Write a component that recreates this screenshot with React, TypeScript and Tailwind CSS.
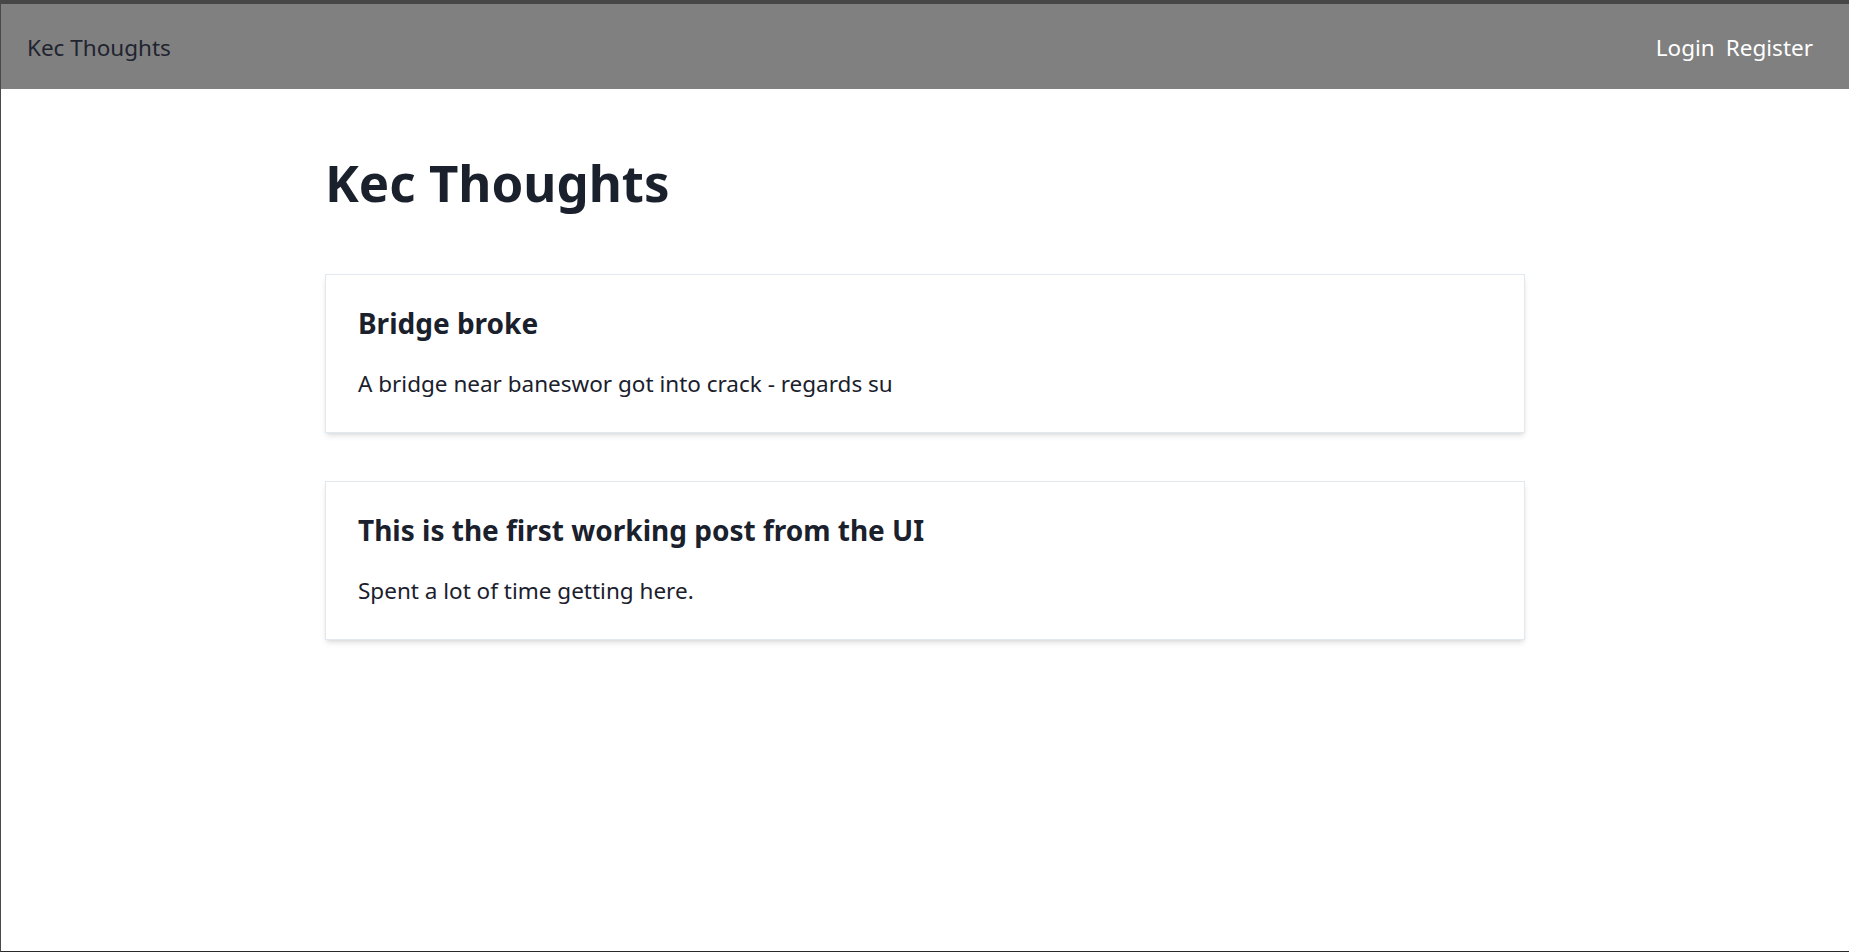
const posts = [
  { title: "Bridge broke", body: "A bridge near baneswor got into crack - regards su" },
  { title: "This is the first working post from the UI", body: "Spent a lot of time getting here." },
];

function Navbar() {
  return (
    <header className="h-[85px] bg-[#808080] flex items-center justify-between pl-[26px] pr-[36px] pt-[3px]">
      <a className="text-[22.5px] text-[#1f2430]">Kec Thoughts</a>
      <nav className="flex items-center gap-[11px] text-[22.5px] text-white">
        <a>Login</a>
        <a>Register</a>
      </nav>
    </header>
  );
}

function PostCard({ title, body }: { title: string; body: string }) {
  return (
    <div className="bg-white border border-[#e2e8f0] shadow-md px-[32px] pt-[30px] h-[159px]">
      <h2 className="text-[28px] font-bold text-[#1a202c] leading-[36px]">{title}</h2>
      <p className="mt-[27px] text-[22.5px] text-[#1a202c] leading-[32px]">{body}</p>
    </div>
  );
}

export default function App() {
  return (
    <div
      className="min-h-screen bg-white border-t-4 border-t-[#474747] border-l border-l-[#4a4a4a] border-b border-b-[#2a2a2a] flex flex-col"
      style={{ fontFamily: '"Segoe UI", "Noto Sans", "Open Sans", sans-serif' }}
    >
      <Navbar />
      <main className="w-[1200px] mx-auto pt-[61px]">
        <h1 className="text-[51px] font-bold text-[#1a202c] leading-[64px] mb-[60px]">Kec Thoughts</h1>
        <div className="flex flex-col gap-[48px]">
          {posts.map((p) => (
            <PostCard key={p.title} title={p.title} body={p.body} />
          ))}
        </div>
      </main>
    </div>
  );
}
